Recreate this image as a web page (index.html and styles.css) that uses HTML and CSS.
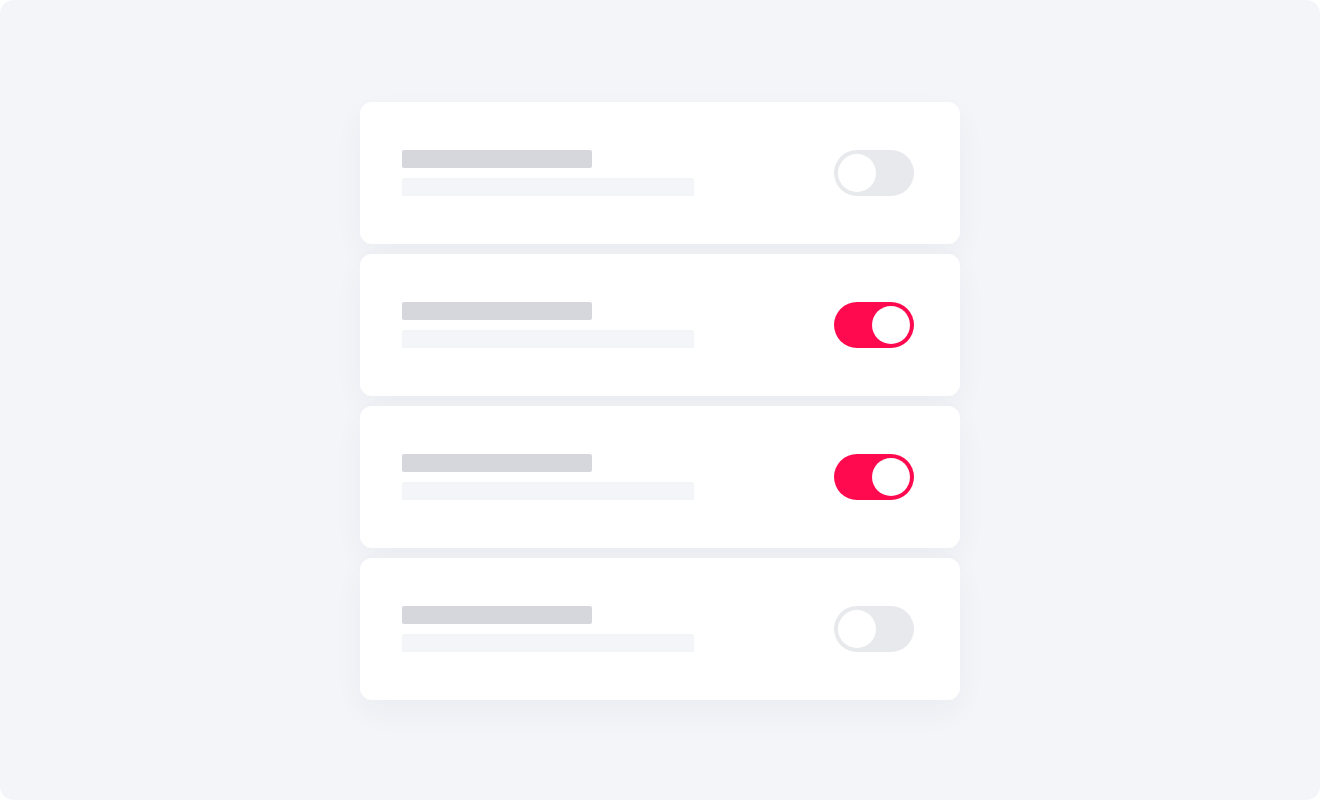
FILE: index.html
```html
<!DOCTYPE html>
<html lang="en">

<head>
    <meta charset="UTF-8">
    <meta name="viewport" content="width=device-width, initial-scale=1.0">
    <title>Settings toggles</title>
    <link rel="stylesheet" href="styles.css">
</head>

<body>
    <div class="frame">
        <div class="list">
            <div class="card">
                <div class="lines">
                    <div class="line title"></div>
                    <div class="line sub"></div>
                </div>
                <div class="toggle"><span class="knob"></span></div>
            </div>
            <div class="card">
                <div class="lines">
                    <div class="line title"></div>
                    <div class="line sub"></div>
                </div>
                <div class="toggle on"><span class="knob"></span></div>
            </div>
            <div class="card">
                <div class="lines">
                    <div class="line title"></div>
                    <div class="line sub"></div>
                </div>
                <div class="toggle on"><span class="knob"></span></div>
            </div>
            <div class="card">
                <div class="lines">
                    <div class="line title"></div>
                    <div class="line sub"></div>
                </div>
                <div class="toggle"><span class="knob"></span></div>
            </div>
        </div>
    </div>
</body>

</html>
```

FILE: styles.css
```css
body {
    margin: 0;
    background: #fff;
    font-family: 'Liberation Sans', Arial, sans-serif;
}

.frame {
    width: 1320px;
    height: 800px;
    background: #f4f5f9;
    border-radius: 14px;
    display: flex;
    justify-content: center;
    padding-top: 102px;
    box-sizing: border-box;
}

.list {
    width: 600px;
    display: flex;
    flex-direction: column;
    gap: 10px;
}

.card {
    background: #fff;
    border-radius: 12px;
    padding: 48px 46px 48px 42px;
    display: flex;
    justify-content: space-between;
    align-items: center;
    box-shadow: 0 12px 30px rgba(30, 40, 80, 0.045);
}

.lines {
    display: flex;
    flex-direction: column;
    gap: 10px;
}

.line {
    height: 18px;
    border-radius: 2px;
}

.line.title {
    width: 190px;
    background: #d6d7dc;
}

.line.sub {
    width: 292px;
    background: #f4f5f9;
}

.toggle {
    width: 80px;
    height: 46px;
    border-radius: 23px;
    background: #e8e9ed;
    padding: 4px;
    box-sizing: border-box;
    display: flex;
}

.knob {
    width: 38px;
    height: 38px;
    border-radius: 50%;
    background: #fff;
}

.toggle.on {
    background: #ff0a4e;
    justify-content: flex-end;
}
```
